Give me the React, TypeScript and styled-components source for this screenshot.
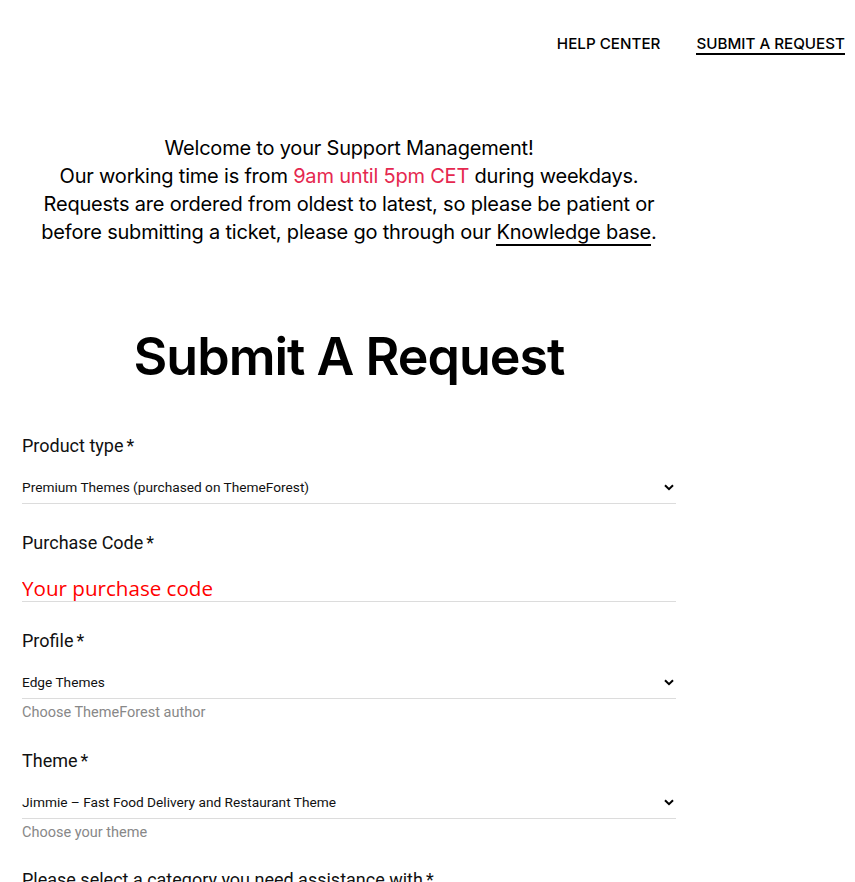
import React from 'react';
import styled, { createGlobalStyle } from 'styled-components';

const GlobalStyle = createGlobalStyle`
  html, body {
    margin: 0;
    padding: 0;
    background: #fff;
  }
  body {
    font-family: Inter, 'Liberation Sans', sans-serif;
    color: #000;
  }
`;

const Page = styled.div`
  width: 855px;
  padding-bottom: 40px;
`;

const TopNav = styled.nav`
  display: flex;
  justify-content: flex-end;
  gap: 36px;
  padding: 35px 10px 0 0;
  height: 27px;
`;

const NavLink = styled.a<{ $active?: boolean }>`
  font-family: Inter, sans-serif;
  font-size: 15.2px;
  font-weight: 500;
  text-transform: uppercase;
  color: #000;
  text-decoration: none;
  line-height: 17px;
  height: 17px;
  padding-bottom: 1px;
  border-bottom: ${p => (p.$active ? '2px solid #000' : '2px solid transparent')};
`;

const Main = styled.main`
  width: 654px;
  margin-left: 22px;
`;

const Intro = styled.div`
  margin-top: 72px;
  text-align: center;
  font-family: Inter, sans-serif;
  font-size: 20px;
  line-height: 28px;
  letter-spacing: -0.2px;
  font-weight: 400;
`;

const Highlight = styled.span`
  color: #e5284f;
`;

const KbLink = styled.a`
  color: #000;
  text-decoration: none;
  border-bottom: 2px solid #000;
`;

const Heading = styled.h1`
  margin: 76px 0 0;
  text-align: center;
  font-family: Inter, sans-serif;
  font-weight: 600;
  font-size: 52px;
  letter-spacing: -1px;
  line-height: 70px;
`;

const Form = styled.form`
  margin-top: 44px;
  display: flex;
  flex-direction: column;
`;

const Field = styled.div<{ $gap?: number }>`
  display: flex;
  flex-direction: column;
  margin-bottom: ${p => p.$gap ?? 29}px;
`;

const Label = styled.label`
  font-family: Roboto, sans-serif;
  font-size: 18px;
  font-weight: 400;
  line-height: 20px;
  color: #111;
`;

const Req = styled.span`
  margin-left: 3px;
`;

const SelectBox = styled.div`
  margin-top: 15px;
  display: flex;
  align-items: center;
  justify-content: space-between;
  height: 33px;
  border-bottom: 1px solid #dcdcdc;
  font-family: Roboto, sans-serif;
  font-size: 13.7px;
  color: #111;
  padding-right: 2px;
  box-sizing: border-box;
`;

const TextInput = styled.input`
  margin-top: 22px;
  height: 27px;
  box-sizing: border-box;
  border: none;
  border-bottom: 1px solid #dcdcdc;
  padding: 0;
  outline: none;
  font-family: 'Open Sans', sans-serif;
  font-size: 20.6px;
  &::placeholder {
    color: #f00;
    opacity: 1;
  }
`;

const Helper = styled.div`
  margin-top: 6px;
  font-family: Roboto, sans-serif;
  font-size: 14.5px;
  line-height: 16px;
  color: #888;
`;

const Chevron = () => (
  <svg width="10" height="7" viewBox="0 0 10 7" fill="none">
    <path d="M1 1.2 L5 5.2 L9 1.2" stroke="#000" strokeWidth="2" />
  </svg>
);

const App: React.FC = () => (
  <Page>
    <GlobalStyle />
    <TopNav>
      <NavLink href="#">Help Center</NavLink>
      <NavLink href="#" $active>Submit A Request</NavLink>
    </TopNav>
    <Main>
      <Intro>
        Welcome to your Support Management!
        <br />
        Our working time is from <Highlight>9am until 5pm CET</Highlight> during weekdays.
        <br />
        Requests are ordered from oldest to latest, so please be patient or
        <br />
        before submitting a ticket, please go through our <KbLink href="#">Knowledge base</KbLink>.
      </Intro>
      <Heading>Submit A Request</Heading>
      <Form>
        <Field>
          <Label>Product type<Req>*</Req></Label>
          <SelectBox>
            <span>Premium Themes (purchased on ThemeForest)</span>
            <Chevron />
          </SelectBox>
        </Field>
        <Field>
          <Label>Purchase Code<Req>*</Req></Label>
          <TextInput placeholder="Your purchase code" />
        </Field>
        <Field $gap={30}>
          <Label>Profile<Req>*</Req></Label>
          <SelectBox>
            <span>Edge Themes</span>
            <Chevron />
          </SelectBox>
          <Helper>Choose ThemeForest author</Helper>
        </Field>
        <Field $gap={29}>
          <Label>Theme<Req>*</Req></Label>
          <SelectBox>
            <span>Jimmie – Fast Food Delivery and Restaurant Theme</span>
            <Chevron />
          </SelectBox>
          <Helper>Choose your theme</Helper>
        </Field>
        <Field>
          <Label>Please select a category you need assistance with<Req>*</Req></Label>
        </Field>
      </Form>
    </Main>
  </Page>
);

export default App;
